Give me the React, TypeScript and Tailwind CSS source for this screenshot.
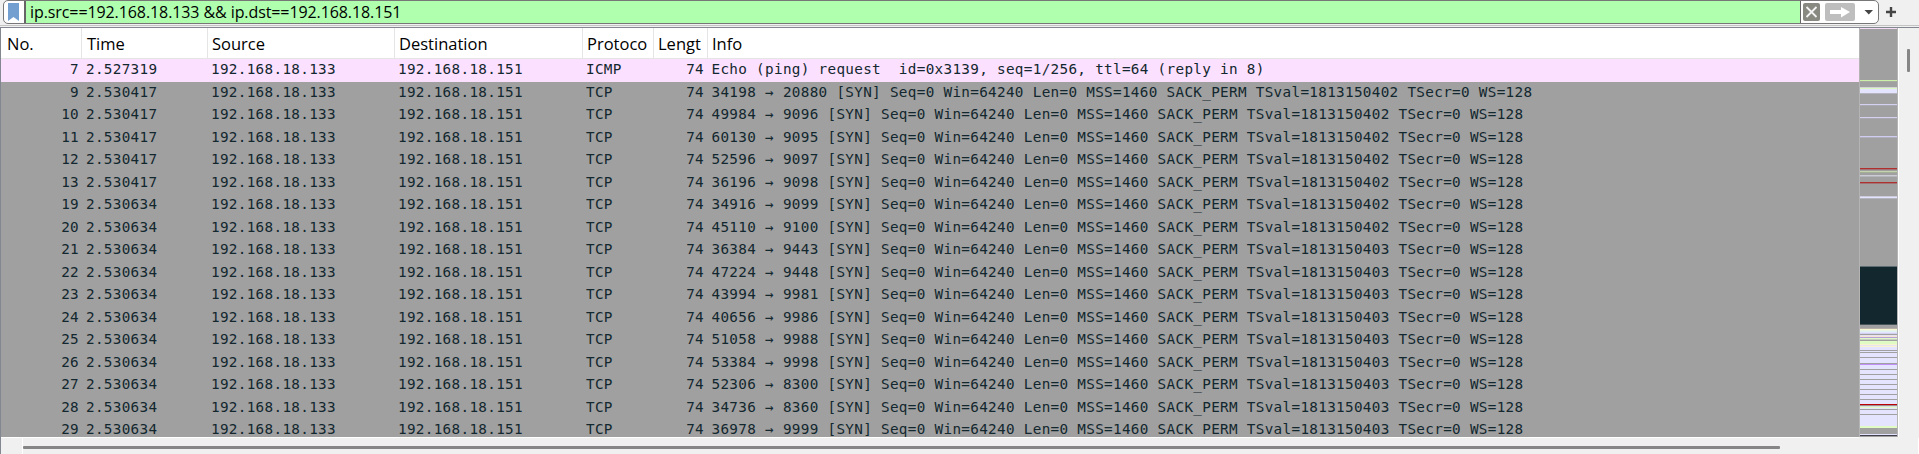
const HEADS: [string, string][] = [
  ["No.", "w-[81px] pl-[6px]"],
  ["Time", "w-[126px] pl-[5px]"],
  ["Source", "w-[187px] pl-[4px]"],
  ["Destination", "w-[188px] pl-[4px]"],
  ["Protoco", "w-[71px] pl-[4px]"],
  ["Lengt", "w-[54px] pl-[4px]"],
  ["Info", "grow pl-[4px] border-r-0"],
];

const syn: [number, number, string, number, number][] = [
  [9, 34198, "2.530417", 20880, 2], [10, 49984, "2.530417", 9096, 2], [11, 60130, "2.530417", 9095, 2],
  [12, 52596, "2.530417", 9097, 2], [13, 36196, "2.530417", 9098, 2], [19, 34916, "2.530634", 9099, 2],
  [20, 45110, "2.530634", 9100, 2], [21, 36384, "2.530634", 9443, 3], [22, 47224, "2.530634", 9448, 3],
  [23, 43994, "2.530634", 9981, 3], [24, 40656, "2.530634", 9986, 3], [25, 51058, "2.530634", 9988, 3],
  [26, 53384, "2.530634", 9998, 3], [27, 52306, "2.530634", 8300, 3], [28, 34736, "2.530634", 8360, 3],
  [29, 36978, "2.530634", 9999, 3],
];

const rows = [
  { no: 7, time: "2.527319", proto: "ICMP", info: "Echo (ping) request  id=0x3139, seq=1/256, ttl=64 (reply in 8)" },
  ...syn.map(([no, src, time, dst, v]) => ({
    no, time, proto: "TCP",
    info: `${src} → ${dst} [SYN] Seq=0 Win=64240 Len=0 MSS=1460 SACK_PERM TSval=181315040${v} TSecr=0 WS=128`,
  })),
];

// Overview stripes: [y, height, colour] in window coordinates
const G = "#a0a0a0";
const stripes: [number, number, string][] = [
  [28, 1, "#f5daf5"],
  [80, 1, "#ccf0a8"], [81, 1, "#a8aaa4"],
  [87, 1, "#d4d4d8"], [88, 1, "#daf8c0"], [89, 4, "#e4e4ff"], [93, 1, "#b4b4c0"],
  [104, 1, "#d4d0f0"], [105, 1, "#a9a8b0"],
  [117, 1, "#d4d0f0"], [118, 1, "#a9a8b0"],
  [136, 1, "#d0ccf0"], [137, 1, "#b0aeba"],
  [168, 1, "#b03030"], [169, 1, "#a07474"], [171, 1, "#c4d4b0"], [172, 1, "#a4ae94"],
  [175, 1, "#ccccd4"], [176, 1, "#b4b4bc"],
  [182, 1, "#b03030"], [183, 1, "#a07474"],
  [196, 1, "#ccccdc"], [197, 1, "#e4e4ff"], [198, 1, "#b4b4bc"],
  [266, 1, "#5c6c70"], [267, 57, "#12272e"], [324, 1, "#465458"],
  [328, 1, "#b8b0a8"], [329, 107, "#e4e4ff"],
  [329, 1, "#f6f8d0"], [330, 1, "#e8f4e4"], [331, 1, "#e0f0f0"], [333, 1, "#d0d0f0"], [334, 1, G],
  [335, 1, "#e8e0ec"], [336, 1, "#f6e4d4"], [337, 1, "#b8a0d8"], [338, 1, "#e0f8c8"], [339, 1, "#c4d0bc"], [340, 1, G],
  [341, 3, "#e0fcc4"], [344, 1, "#f8f4d0"], [345, 1, "#e8e4f0"], [346, 1, "#f8f4d0"],
  [350, 1, G], [352, 1, G], [357, 1, G], [363, 1, G], [364, 1, "#c090f8"],
  [369, 1, G], [374, 1, G], [379, 1, G], [384, 1, G], [389, 1, G], [394, 1, G], [399, 1, G],
  [404, 1, "#bc0008"], [405, 1, "#a08c8c"], [406, 1, "#d8e0e0"], [407, 1, "#e4fcc8"], [409, 1, G], [414, 1, G],
  [426, 2, "#e0fcc4"], [428, 6, G], [435, 1, "#40404c"], [436, 1, G],
];

function FilterBar() {
  return (
    <div className="flex h-[25px] shrink-0 items-start">
      <div className="ml-[3px] flex h-[24px] w-[1876px] shrink-0 overflow-hidden rounded-[5px] border border-[#777777] bg-white">
        <div className="flex w-[22px] shrink-0 justify-center border-r-2 border-[#666666] pr-px pt-[2px]">
          <svg width="11" height="18" viewBox="0 0 11 18"><path d="M0 0h11v18l-5.500-4-5.500 4z" fill="#729fd0" /></svg>
        </div>
        <div className="flex w-[1774px] shrink-0 items-center bg-[#afffaf] pl-[4px] font-['Open_Sans',sans-serif] text-[16px] tracking-[-0.09px] text-black">
          <span className="whitespace-pre">ip.src==192.168.18.133 &amp;&amp; ip.dst==192.168.18.151</span>
        </div>
        <svg className="shrink-0" width="78" height="22" viewBox="1800 1 78 22">
          <rect x="1799" y="1" width="2" height="22" fill="#666" />
          <rect x="1803" y="3" width="17" height="18" rx="2" fill="#888a82" />
          <path d="M1806.500 7l10 10M1816.500 7l-10 10" stroke="#f4f4f4" strokeWidth="1.800" />
          <rect x="1825" y="3" width="30" height="18" rx="2" fill="#bebebe" />
          <path d="M1830 10h11V7l9 5-9 5.500V14h-11z" fill="#fff" />
          <path d="M1864.500 10h8.500l-4.200 4.500z" fill="#444" />
        </svg>
      </div>
      <svg className="ml-[6px] shrink-0" width="12" height="24" viewBox="1885 0 12 24">
        <path d="M1886 12h10M1891 7v10" stroke="#444" strokeWidth="2.400" />
      </svg>
    </div>
  );
}

export default function App() {
  return (
    <div className="flex h-[454px] w-[1919px] flex-col overflow-hidden bg-[#f0f0f0]">
      <FilterBar />
      <div className="h-px shrink-0 bg-[#c4c4c4]" />
      <div className="mt-px flex h-[427px] flex-col border-l border-t border-[#828790]">
        <div className="flex h-[409px] shrink-0">
          <div className="flex w-[1858px] shrink-0 flex-col overflow-hidden bg-[#a0a0a0]">
            <div className="flex h-[31.4px] shrink-0 border-b border-[#e5e5e5] bg-white font-['Open_Sans',sans-serif] text-[16.5px] text-black">
              {HEADS.map(([label, cls]) => (
                <div key={label} className={`${cls} flex shrink-0 items-center border-r border-[#e5e5e5] pt-[2px]`}>{label}</div>
              ))}
            </div>
            {rows.map((r) => (
              <div key={r.no} className={`flex h-[22.5px] shrink-0 whitespace-pre font-['DejaVu_Sans_Mono',monospace] text-[14.3px] leading-[20px] tracking-[0.315px] text-[#12272e] ${r.no === 7 ? "bg-[#fce0ff]" : "bg-[#a0a0a0]"}`}>
                <div className="w-[81px] shrink-0 pr-[3px] text-right">{r.no}</div>
                <div className="w-[126px] shrink-0 pl-[4px]">{r.time}</div>
                <div className="w-[187px] shrink-0 pl-[3px]">192.168.18.133</div>
                <div className="w-[188px] shrink-0 pl-[3px]">192.168.18.151</div>
                <div className="w-[71px] shrink-0 pl-[3px]">{r.proto}</div>
                <div className="w-[54px] shrink-0 pr-[4px] text-right">74</div>
                <div className="pl-[3.5px]">{r.info}</div>
              </div>
            ))}
          </div>
          <svg className="shrink-0" width="40" height="409" viewBox="1859 28 40 409" shapeRendering="crispEdges">
            <rect x="1859" y="28" width="39" height="409" fill="#b4b4b4" />
            <rect x="1860" y="28" width="37" height="409" fill={G} />
            {stripes.map(([y, h, c]) => <rect key={`${y}-${h}`} x="1860" y={y} width="37" height={h} fill={c} />)}
            <rect x="1898" y="28" width="1" height="409" fill="#ffffff" />
          </svg>
          <div className="pl-[8px] pt-[21px]">
            <div className="h-[23px] w-[3px] rounded-[1px] bg-[#868686]" />
          </div>
        </div>
        <div className="h-px w-[1858px] shrink-0 bg-white" />
        <div className="flex grow border-r border-white">
          <div className="w-[22px] border-r border-white" />
          <div className="mt-[8px] h-[3px] w-[1757px] rounded-[1px] bg-[#868686]" />
        </div>
      </div>
    </div>
  );
}
